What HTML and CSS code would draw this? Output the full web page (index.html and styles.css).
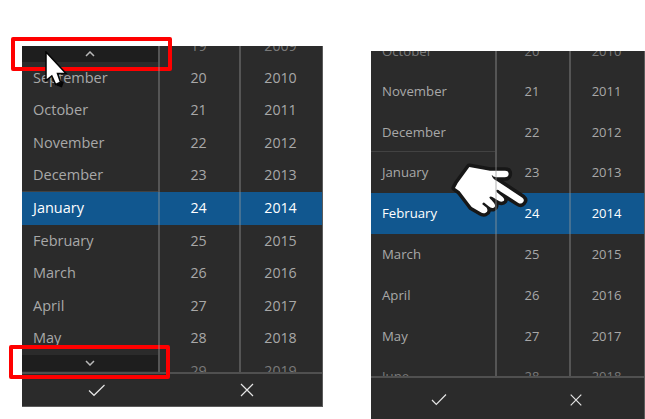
FILE: index.html
```
<!DOCTYPE html>
<html lang="en">
<head>
<meta charset="utf-8">
<title>Date picker</title>
<link rel="stylesheet" href="styles.css">
</head>
<body>
<main class="stage">
  <section class="picker mouse">
    <div class="columns">
      <div class="column months">
        <div class="list"><div></div><div>September</div><div>October</div><div>November</div><div class="year-end">December</div><div class="selected">January</div><div>February</div><div>March</div><div>April</div><div>May</div><div></div></div>
        <div class="scroll up"><svg width="10" height="6" viewBox="0 0 10 6"><path d="M1 5 5 1 9 5"/></svg></div>
        <div class="scroll down"><svg width="10" height="6" viewBox="0 0 10 6"><path d="M1 1 5 5 9 1"/></svg></div>
      </div>
      <div class="column"><div class="list"><div class="faded first">19</div><div>20</div><div>21</div><div>22</div><div>23</div><div class="selected">24</div><div>25</div><div>26</div><div>27</div><div>28</div><div class="faded">29</div></div></div>
      <div class="column"><div class="list"><div class="faded first">2009</div><div>2010</div><div>2011</div><div>2012</div><div>2013</div><div class="selected">2014</div><div>2015</div><div>2016</div><div>2017</div><div>2018</div><div class="faded">2019</div></div></div>
    </div>
    <div class="actions">
      <div><svg width="18" height="14" viewBox="0 0 18 14"><path d="M1 7.5 6 12.3 16.5 2"/></svg></div>
      <div><svg width="14" height="14" viewBox="0 0 14 14"><path d="M1 1 13 13M13 1 1 13"/></svg></div>
    </div>
    <div class="marker top"></div>
    <div class="marker bottom"></div>
    <svg class="arrow" width="24" height="37" viewBox="0 0 24 37"><path class="shadow" d="M12 33 16 34.500 17.500 30.500"/><path d="M1 1V29.500L6.800 25 10.700 33.500 15.500 31.200 12.500 22.500H21Z"/></svg>
  </section>

  <section class="picker touch">
    <div class="columns">
      <div class="column months"><div class="list"><div class="faded first">October</div><div>November</div><div class="year-end">December</div><div>January</div><div class="selected">February</div><div>March</div><div>April</div><div>May</div><div class="faded">June</div></div></div>
      <div class="column"><div class="list"><div class="faded first">20</div><div>21</div><div>22</div><div>23</div><div class="selected">24</div><div>25</div><div>26</div><div>27</div><div class="faded">28</div></div></div>
      <div class="column"><div class="list"><div class="faded first">2010</div><div>2011</div><div>2012</div><div>2013</div><div class="selected">2014</div><div>2015</div><div>2016</div><div>2017</div><div class="faded">2018</div></div></div>
    </div>
    <div class="actions">
      <div><svg width="16" height="13" viewBox="0 0 16 13"><path d="M1 7 5.3 11.5 15 1.5"/></svg></div>
      <div><svg width="12" height="12" viewBox="0 0 12 12"><path d="M.7.7 11.3 11.3M11.3.7.7 11.3"/></svg></div>
    </div>
    <svg class="hand" width="84" height="62" viewBox="0 0 252 186"><path d="M64 27 126 38H171Q182 38 182 48 181 58 170 58H145Q135 56 131 50 132 61 147 69L223 119Q231 126 225 133 219 140 210 134L155 99Q149 93 145 97 144 101 152 107L164 117Q173 126 165 130 158 134 149 127L133 117Q127 114 124 118 125 123 131 127L138 135Q145 145 137 149 130 152 122 145L109 134Q103 133 103 139L116 149Q122 160 113 164 106 168 97 162L71 147 61 134 35 100 21 90 29 75Z"/></svg>
  </section>
</main>
</body>
</html>
```
FILE: styles.css
```
* { box-sizing: border-box; }
body { margin: 0; background: #fff; overflow: hidden; }
.stage {
  width: 645px;
  height: 419px;
  display: flex;
  align-items: flex-start;
  gap: 48px;
  padding-left: 22px;
  font-family: "Open Sans", "Noto Sans", sans-serif;
  overflow: hidden;
}
.picker {
  position: relative;
  flex: none;
  background: #2b2b2b;
  color: #a8a8a8;
  border-right: 1px solid #5b5b5b;
}
.mouse {
  --row: 32.6px;
  width: 301px;
  margin-top: 46px;
  border-bottom: 1px solid #5b5b5b;
  font-size: 14.2px;
}
.touch {
  --row: 40.8px;
  width: 274px;
  margin-top: 51px;
  font-size: 13px;
}
.columns { display: grid; overflow: hidden; border-bottom: 2px solid #505050; }
.mouse .columns { grid-template-columns: 136px 81px 83px; height: 328px; }
.touch .columns { grid-template-columns: 124px 74px 75px; height: 327px; }
.column { position: relative; overflow: hidden; text-align: center; }
.column + .column::before {
  content: "";
  position: absolute;
  z-index: 1;
  inset: 0 auto 0 0;
  width: 2px;
  background: rgba(155, 155, 155, .38);
}
.months { text-align: left; }
.mouse .months { font-size: 14.5px; }
.touch .months { font-size: 13.2px; }
.mouse .list { margin-top: -17px; }
.touch .list { margin-top: -21px; }
.list div { height: var(--row); line-height: var(--row); }
.months .list div { padding-left: 11px; }
.list .year-end { border-bottom: 1px solid #424242; }
.list .selected { background: #11578f; color: #fff; }
.list .faded { color: #7a7a7a; }
.list .first { padding-top: 1px; }
.scroll {
  position: absolute;
  left: 0;
  right: 0;
  height: 16px;
  display: flex;
  align-items: center;
  justify-content: center;
  background: #1e1e1e;
}
.up { top: 0; }
.down { bottom: 1px; }
svg { display: block; fill: none; stroke: #b8b8b8; stroke-width: 1.5; }
.actions { display: grid; grid-template-columns: 1fr 1fr; }
.actions div { display: flex; align-items: center; justify-content: center; }
.actions svg { stroke: #e5e5e5; stroke-width: 1.2; }
.mouse .actions { height: 32px; }
.touch .actions { height: 43px; }
.marker { position: absolute; border: 4px solid #f00; border-radius: 2px; }
.top { left: -11px; top: -9px; width: 161px; height: 34px; }
.bottom { left: -13px; top: 299px; width: 161px; height: 34px; }
.arrow { position: absolute; left: 23px; top: 5px; }
.arrow path { fill: #fff; stroke: #050505; stroke-width: 1.5; }
.arrow .shadow { fill: none; stroke-width: 3; }
.hand { position: absolute; left: 77px; top: 107px; overflow: visible; }
.hand path { fill: #fff; stroke: #171717; stroke-width: 21; stroke-linejoin: round; paint-order: stroke; }
```
